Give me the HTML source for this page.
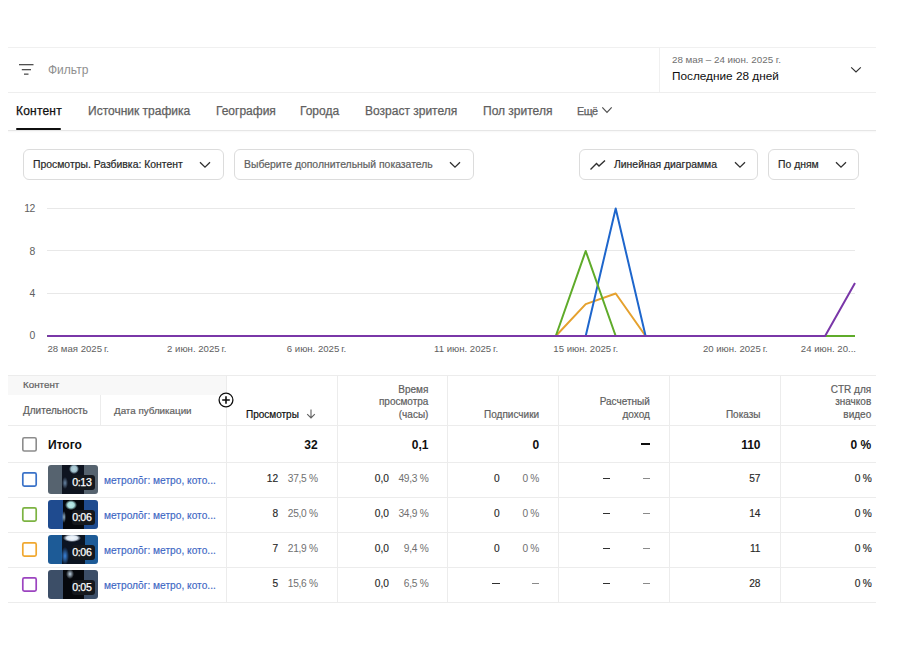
<!DOCTYPE html>
<html><head><meta charset="utf-8">
<style>
*{box-sizing:border-box}
html,body{margin:0;padding:0;background:#fff;width:900px;height:650px;overflow:hidden;font-family:"Liberation Sans",sans-serif;color:#0f0f0f}
.a{position:absolute;white-space:nowrap}
.hl{position:absolute;height:1px;background:#ececec}
.vl{position:absolute;width:1px;background:#ececec}
.tab{position:absolute;top:104px;font-size:12px;color:#606060;line-height:14px;-webkit-text-stroke:0.25px currentColor}
.dd{position:absolute;top:149px;height:31px;border:1px solid #dcdcdc;border-radius:6px;background:#fff}
.dd span{position:absolute;top:8px;font-size:10.4px;line-height:13px;color:#282828;-webkit-text-stroke:0.2px currentColor}
.chev{position:absolute}
.yl{position:absolute;font-size:10.4px;color:#606060;line-height:12px;text-align:right;letter-spacing:-0.5px}
.xl{position:absolute;top:342.5px;font-size:9.6px;color:#606060;line-height:12px;white-space:nowrap}
.hd{font-size:10px;line-height:12.5px;color:#606060}
.cb{width:15px;height:15px;border:2px solid #909090;border-radius:2px}
.tv{top:438px;font-size:12px;line-height:14px;font-weight:700;color:#0f0f0f;text-align:right}
.rv{font-size:10.2px;line-height:12px;color:#282828;text-align:right;-webkit-text-stroke:0.15px currentColor}
.rp{font-size:10.2px;line-height:12px;color:#707070;text-align:right;letter-spacing:-0.3px}
.lk{font-size:10.2px;line-height:12px;color:#3d66c4}
.thumb{width:49.5px;height:28.5px;border-radius:3px;overflow:hidden}
.badge{position:absolute;left:24px;top:10px;width:22.7px;height:14.7px;border-radius:3px;background:#15181d;color:#fff;font-size:10.6px;line-height:14.7px;text-align:center;-webkit-text-stroke:0.25px #fff;letter-spacing:-0.3px;text-indent:-3px}
.th1{background:radial-gradient(ellipse 5px 5px at 26px 4px,#b8d4dc 0,#9fbfcc 60%,transparent 100%),radial-gradient(ellipse 3px 6px at 17px 18px,#6a88a8 0,transparent 100%),linear-gradient(90deg,#56636f 0,#56636f 28%,#0e1420 28%,#0e1420 72%,#56636f 72%)}
.th2{background:radial-gradient(ellipse 6px 5px at 23px 5px,#bfeaea 0,#a8dede 55%,transparent 100%),radial-gradient(ellipse 2px 6px at 16px 17px,#9ec0d8 0,transparent 100%),linear-gradient(90deg,#1f4b8f 0,#1f4b8f 30%,#05080e 30%,#05080e 72%,#1f4b8f 72%)}
.th3{background:radial-gradient(ellipse 9px 4px at 24px 3px,#f4f8fc 0,#dde8f4 60%,transparent 100%),radial-gradient(ellipse 4px 9px at 17px 21px,#3b86e0 0,transparent 100%),linear-gradient(90deg,#1d5b97 0,#1d5b97 28%,#0b1422 28%,#0b1422 74%,#1d5b97 74%)}
.th4{background:radial-gradient(ellipse 4px 5px at 22px 4px,#c0d4e4 0,transparent 100%),linear-gradient(90deg,#3c4e67 0,#3c4e67 30%,#06080c 30%,#06080c 72%,#3c4e67 72%)}
.md{-webkit-text-stroke:0.2px currentColor}
.lk{-webkit-text-stroke:0.15px currentColor}
</style></head><body>

<!-- card top border -->
<div class="hl" style="left:8px;top:47px;width:868px;background:#f0f0f0"></div>
<!-- filter icon -->
<svg class="a" style="left:17px;top:60px" width="18" height="18" viewBox="0 0 18 18">
 <rect x="2" y="4" width="14.5" height="1.3" fill="#505050"/>
 <rect x="4.8" y="9" width="9.2" height="1.3" fill="#505050"/>
 <rect x="7" y="13.5" width="4.5" height="1.3" fill="#505050"/>
</svg>
<div class="a" style="left:48px;top:63px;font-size:12px;color:#8f8f8f;line-height:14px">Фильтр</div>
<!-- date picker -->
<div class="vl" style="left:659px;top:47px;height:45px;background:#f0f0f0"></div>
<div class="a" style="left:672px;top:54px;font-size:9.8px;color:#6f6f6f;line-height:11px">28 мая – 24 июн. 2025 г.</div>
<div class="a" style="left:672px;top:69px;font-size:11.8px;color:#0f0f0f;line-height:14px">Последние 28 дней</div>
<svg class="a" style="left:850px;top:66px" width="12" height="8" viewBox="0 0 12 8"><path d="M1.2 1.4 L6 6 L10.8 1.4" fill="none" stroke="#303030" stroke-width="1.15"/></svg>
<div class="hl" style="left:8px;top:92px;width:868px;background:#eeeeee"></div>

<!-- tabs -->
<div class="tab" style="left:16px;color:#0f0f0f;letter-spacing:0.2px">Контент</div>
<div class="tab" style="left:88px">Источник трафика</div>
<div class="tab" style="left:216px">География</div>
<div class="tab" style="left:300px">Города</div>
<div class="tab" style="left:365px">Возраст зрителя</div>
<div class="tab" style="left:483px">Пол зрителя</div>
<div class="tab" style="left:577px;font-size:10.8px;top:104px;letter-spacing:-0.5px">Ещё</div>
<svg class="a" style="left:601px;top:106px" width="12" height="8" viewBox="0 0 12 8"><path d="M1.3 1.4 L6 6.4 L10.7 1.4" fill="none" stroke="#505050" stroke-width="1.2"/></svg>
<div class="a" style="left:16px;top:127.6px;width:44.5px;height:2.2px;border-radius:1px;background:#0f0f0f"></div>
<div class="hl" style="left:8px;top:130px;width:868px;background:#e6e6e6"></div>
<div class="a" style="left:8px;top:131px;width:868px;height:2px;background:linear-gradient(#f7f7f7,#fff)"></div>

<!-- dropdowns -->
<div class="dd" style="left:23px;width:201px"><span style="left:9px">Просмотры. Разбивка: Контент</span>
 <svg class="chev" style="left:175px;top:11px" width="12" height="8" viewBox="0 0 12 8"><path d="M1 1.2 L6 6.2 L11 1.2" fill="none" stroke="#303030" stroke-width="1.3"/></svg></div>
<div class="dd" style="left:234px;width:240px"><span style="left:9px;color:#606060">Выберите дополнительный показатель</span>
 <svg class="chev" style="left:214px;top:11px" width="12" height="8" viewBox="0 0 12 8"><path d="M1 1.2 L6 6.2 L11 1.2" fill="none" stroke="#303030" stroke-width="1.3"/></svg></div>
<div class="dd" style="left:579px;width:179px">
 <svg class="chev" style="left:9px;top:9px" width="18" height="12" viewBox="0 0 18 12"><path d="M1.5 10.5 L7.5 4.5 L10 7 L16 1.5" fill="none" stroke="#303030" stroke-width="1.4"/></svg>
 <span style="left:34px">Линейная диаграмма</span>
 <svg class="chev" style="left:154px;top:11px" width="12" height="8" viewBox="0 0 12 8"><path d="M1 1.2 L6 6.2 L11 1.2" fill="none" stroke="#303030" stroke-width="1.3"/></svg></div>
<div class="dd" style="left:768px;width:91px"><span style="left:9px">По дням</span>
 <svg class="chev" style="left:66px;top:11px" width="12" height="8" viewBox="0 0 12 8"><path d="M1 1.2 L6 6.2 L11 1.2" fill="none" stroke="#303030" stroke-width="1.3"/></svg></div>

<!-- chart -->
<div class="yl" style="right:865.3px;top:203.2px">12</div>
<div class="yl" style="right:865.3px;top:245.6px">8</div>
<div class="yl" style="right:865.3px;top:287.9px">4</div>
<div class="yl" style="right:865.3px;top:330.3px">0</div>
<svg class="a" style="left:0;top:0" width="900" height="370" viewBox="0 0 900 370">
 <g stroke="#e8e8e8" stroke-width="1">
  <line x1="47" y1="208.5" x2="855" y2="208.5"/>
  <line x1="47" y1="250.5" x2="855" y2="250.5"/>
  <line x1="47" y1="293.5" x2="855" y2="293.5"/>
 </g>
 <g fill="none" stroke-width="2" stroke-linejoin="round">
  <polyline stroke="#e5a12e" points="47.2,336.0 555.8,336.0 585.7,304.1 615.7,293.5 645.6,336.0 855.0,336.0"/>
  <polyline stroke="#1e66cc" points="47.2,336.0 585.7,336.0 615.7,208.5 645.6,336.0 855.0,336.0"/>
  <polyline stroke="#5fab2a" points="47.2,336.0 555.8,336.0 585.7,251.0 615.7,336.0 855.0,336.0"/>
  <polyline stroke="#7a37a8" points="47.2,336.0 825.1,336.0 855.0,282.9"/>
 </g>
</svg>
<div class="xl" style="left:47.5px">28 мая 2025&#8201;г.</div>
<div class="xl" style="left:136.8px;width:120px;text-align:center">2 июн. 2025&#8201;г.</div>
<div class="xl" style="left:256.5px;width:120px;text-align:center">6 июн. 2025&#8201;г.</div>
<div class="xl" style="left:406.1px;width:120px;text-align:center">11 июн. 2025&#8201;г.</div>
<div class="xl" style="left:525.7px;width:120px;text-align:center">15 июн. 2025&#8201;г.</div>
<div class="xl" style="left:675.3px;width:120px;text-align:center">20 июн. 2025&#8201;г.</div>
<div class="xl" style="right:44px;text-align:right">24 июн. 20...</div>

<!-- table -->
<div class="hl" style="left:8px;top:375px;width:868px"></div>
<div class="a" style="left:8px;top:376px;width:218px;height:19px;background:#f8f8f8"></div>
<div class="hl" style="left:8px;top:425px;width:868px"></div>
<div class="hl" style="left:8px;top:462px;width:868px"></div>
<div class="hl" style="left:8px;top:497px;width:868px"></div>
<div class="hl" style="left:8px;top:532px;width:868px"></div>
<div class="hl" style="left:8px;top:567px;width:868px"></div>
<div class="hl" style="left:8px;top:602px;width:868px"></div>
<div class="vl" style="left:100px;top:395px;height:30px"></div>
<div class="vl" style="left:226px;top:375px;height:228px"></div>
<div class="vl" style="left:337px;top:375px;height:228px"></div>
<div class="vl" style="left:447px;top:375px;height:228px"></div>
<div class="vl" style="left:558px;top:375px;height:228px"></div>
<div class="vl" style="left:669px;top:375px;height:228px"></div>
<div class="vl" style="left:780px;top:375px;height:228px"></div>
<div class="a md" style="left:23px;top:379px;font-size:9.8px;line-height:12px;color:#606060">Контент</div>
<div class="a md" style="left:23px;top:404.5px;font-size:10px;line-height:12px;color:#606060">Длительность</div>
<div class="a md" style="left:114px;top:404.5px;font-size:9.8px;line-height:12px;color:#606060">Дата публикации</div>
<svg class="a" style="left:218px;top:392px" width="16" height="16" viewBox="0 0 16 16"><circle cx="8" cy="8" r="6.9" fill="#fff" stroke="#0f0f0f" stroke-width="1.3"/><path d="M8 4.2V11.8M4.2 8H11.8" stroke="#0f0f0f" stroke-width="1.6"/></svg>
<div class="a hd md" style="left:246px;top:408.5px;color:#0f0f0f">Просмотры</div>
<svg class="a" style="left:305px;top:409px" width="12" height="10" viewBox="0 0 12 10"><path d="M6 0.5V9M2.2 5.2L6 9L9.8 5.2" fill="none" stroke="#606060" stroke-width="1.1"/></svg>
<div class="a hd md" style="right:471.6px;top:383.8px;text-align:right">Время<br>просмотра<br>(часы)</div>
<div class="a hd md" style="right:360.9px;top:408.8px;text-align:right">Подписчики</div>
<div class="a hd md" style="right:250.2px;top:396.3px;text-align:right">Расчетный<br>доход</div>
<div class="a hd md" style="right:139.5px;top:408.8px;text-align:right">Показы</div>
<div class="a hd md" style="right:28.8px;top:383.8px;text-align:right">CTR для<br>значков<br>видео</div>
<svg class="a" style="left:21px;top:436px" width="17" height="17" viewBox="0 0 17 17"><rect x="1.8" y="1.8" width="13.4" height="13.2" rx="1.5" fill="none" stroke="#8c8c8c" stroke-width="1.6"/></svg>
<div class="a" style="left:48px;top:438px;font-size:12px;line-height:14px;font-weight:700;color:#0f0f0f">Итого</div>
<div class="a tv" style="right:582.3px">32</div>
<div class="a tv" style="right:471.6px">0,1</div>
<div class="a tv" style="right:360.9px">0</div>
<div class="a" style="left:640.8px;top:443px;width:9px;height:1.8px;background:#0f0f0f"></div>
<div class="a tv" style="right:139.5px">110</div>
<div class="a tv" style="right:28.8px">0&nbsp;%</div>
<svg class="a" style="left:21px;top:471px" width="17" height="17" viewBox="0 0 17 17"><rect x="1.8" y="1.9" width="13.4" height="13.2" rx="1.5" fill="none" stroke="#3a72c8" stroke-width="1.7"/></svg>
<div class="a thumb th1" style="left:48px;top:465px"><div class="badge">0:13</div></div>
<div class="a lk" style="left:104px;top:474.5px">метролŏг: метро, кото...</div>
<div class="a rv" style="right:621.8px;top:473px">12</div>
<div class="a rp" style="right:582.3px;top:473px">37,5&nbsp;%</div>
<div class="a rv" style="right:511.1px;top:473px">0,0</div>
<div class="a rp" style="right:471.6px;top:473px">49,3&nbsp;%</div>
<div class="a rv" style="right:400.4px;top:473px">0</div>
<div class="a rp" style="right:360.9px;top:473px">0&nbsp;%</div>
<div class="a" style="left:603.1px;top:478px;width:7.2px;height:1.3px;background:#303030"></div>
<div class="a" style="left:642.6px;top:478px;width:7.2px;height:1.3px;background:#8a8a8a"></div>
<div class="a rv" style="right:139.5px;top:473px">57</div>
<div class="a rv" style="right:28.5px;top:473px;letter-spacing:-0.3px">0&nbsp;%</div>
<svg class="a" style="left:21px;top:506px" width="17" height="17" viewBox="0 0 17 17"><rect x="1.8" y="1.9" width="13.4" height="13.2" rx="1.5" fill="none" stroke="#7cb342" stroke-width="1.7"/></svg>
<div class="a thumb th2" style="left:48px;top:500px"><div class="badge">0:06</div></div>
<div class="a lk" style="left:104px;top:509.5px">метролŏг: метро, кото...</div>
<div class="a rv" style="right:621.8px;top:508px">8</div>
<div class="a rp" style="right:582.3px;top:508px">25,0&nbsp;%</div>
<div class="a rv" style="right:511.1px;top:508px">0,0</div>
<div class="a rp" style="right:471.6px;top:508px">34,9&nbsp;%</div>
<div class="a rv" style="right:400.4px;top:508px">0</div>
<div class="a rp" style="right:360.9px;top:508px">0&nbsp;%</div>
<div class="a" style="left:603.1px;top:513px;width:7.2px;height:1.3px;background:#303030"></div>
<div class="a" style="left:642.6px;top:513px;width:7.2px;height:1.3px;background:#8a8a8a"></div>
<div class="a rv" style="right:139.5px;top:508px">14</div>
<div class="a rv" style="right:28.5px;top:508px;letter-spacing:-0.3px">0&nbsp;%</div>
<svg class="a" style="left:21px;top:541px" width="17" height="17" viewBox="0 0 17 17"><rect x="1.8" y="1.9" width="13.4" height="13.2" rx="1.5" fill="none" stroke="#f0a830" stroke-width="1.7"/></svg>
<div class="a thumb th3" style="left:48px;top:535px"><div class="badge">0:06</div></div>
<div class="a lk" style="left:104px;top:544.5px">метролŏг: метро, кото...</div>
<div class="a rv" style="right:621.8px;top:543px">7</div>
<div class="a rp" style="right:582.3px;top:543px">21,9&nbsp;%</div>
<div class="a rv" style="right:511.1px;top:543px">0,0</div>
<div class="a rp" style="right:471.6px;top:543px">9,4&nbsp;%</div>
<div class="a rv" style="right:400.4px;top:543px">0</div>
<div class="a rp" style="right:360.9px;top:543px">0&nbsp;%</div>
<div class="a" style="left:603.1px;top:548px;width:7.2px;height:1.3px;background:#303030"></div>
<div class="a" style="left:642.6px;top:548px;width:7.2px;height:1.3px;background:#8a8a8a"></div>
<div class="a rv" style="right:139.5px;top:543px">11</div>
<div class="a rv" style="right:28.5px;top:543px;letter-spacing:-0.3px">0&nbsp;%</div>
<svg class="a" style="left:21px;top:576px" width="17" height="17" viewBox="0 0 17 17"><rect x="1.8" y="1.9" width="13.4" height="13.2" rx="1.5" fill="none" stroke="#9c44c0" stroke-width="1.7"/></svg>
<div class="a thumb th4" style="left:48px;top:570px"><div class="badge">0:05</div></div>
<div class="a lk" style="left:104px;top:579.5px">метролŏг: метро, кото...</div>
<div class="a rv" style="right:621.8px;top:578px">5</div>
<div class="a rp" style="right:582.3px;top:578px">15,6&nbsp;%</div>
<div class="a rv" style="right:511.1px;top:578px">0,0</div>
<div class="a rp" style="right:471.6px;top:578px">6,5&nbsp;%</div>
<div class="a" style="left:492.4px;top:583px;width:7.2px;height:1.3px;background:#303030"></div>
<div class="a" style="left:531.9px;top:583px;width:7.2px;height:1.3px;background:#8a8a8a"></div>
<div class="a" style="left:603.1px;top:583px;width:7.2px;height:1.3px;background:#303030"></div>
<div class="a" style="left:642.6px;top:583px;width:7.2px;height:1.3px;background:#8a8a8a"></div>
<div class="a rv" style="right:139.5px;top:578px">28</div>
<div class="a rv" style="right:28.5px;top:578px;letter-spacing:-0.3px">0&nbsp;%</div>

</body></html>
